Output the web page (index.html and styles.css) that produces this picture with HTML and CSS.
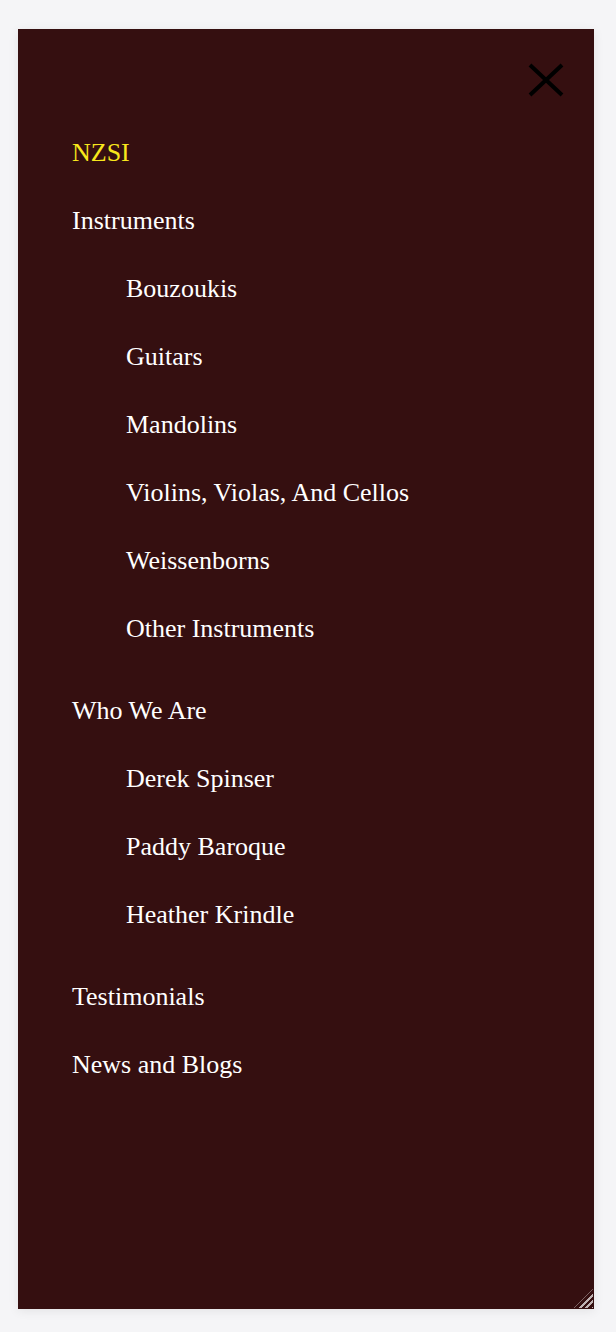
FILE: index.html
```html
<!DOCTYPE html>
<html lang="en">
<head>
<meta charset="utf-8">
<title>Menu</title>
<link rel="stylesheet" href="styles.css">
</head>
<body>
<div class="drawer">
  <button class="close" aria-label="Close menu">
    <svg width="40" height="40" viewBox="0 0 40 40"><path d="M4 5 L36 35 M36 5 L4 35" stroke="#000" stroke-width="4" stroke-linecap="butt" fill="none"/></svg>
  </button>
  <ul class="menu">
    <li><a class="brand" href="#">NZSI</a></li>
    <li><a href="#">Instruments</a>
      <ul class="submenu">
        <li><a href="#">Bouzoukis</a></li>
        <li><a href="#">Guitars</a></li>
        <li><a href="#">Mandolins</a></li>
        <li><a href="#">Violins, Violas, And Cellos</a></li>
        <li><a href="#">Weissenborns</a></li>
        <li><a href="#">Other Instruments</a></li>
      </ul>
    </li>
    <li><a href="#">Who We Are</a>
      <ul class="submenu">
        <li><a href="#">Derek Spinser</a></li>
        <li><a href="#">Paddy Baroque</a></li>
        <li><a href="#">Heather Krindle</a></li>
      </ul>
    </li>
    <li><a href="#">Testimonials</a></li>
    <li><a href="#">News and Blogs</a></li>
  </ul>
  <span class="grip" aria-hidden="true"></span>
</div>
</body>
</html>
```

FILE: styles.css
```css
html, body {
  margin: 0;
  padding: 0;
  background: #f5f5f7;
}
body {
  padding: 29px 22px 23px 18px;
  font-family: "Liberation Serif", "Times New Roman", serif;
}
.drawer {
  position: relative;
  box-sizing: border-box;
  width: 576px;
  height: 1280px;
  background: #350f10;
  padding: 31px 28px 0 54px;
  display: flex;
  flex-direction: column;
  box-shadow: 0 2px 10px rgba(0, 0, 0, 0.08);
}
.close {
  align-self: flex-end;
  width: 40px;
  height: 40px;
  padding: 0;
  border: 0;
  background: transparent;
  display: block;
}
.close svg { display: block; }
.menu, .submenu {
  list-style: none;
  margin: 0;
  padding: 0;
}
.menu {
  margin-top: 19px;
}
.submenu {
  padding-left: 54px;
  margin-bottom: 14px;
}
.menu a {
  display: block;
  line-height: 68px;
  font-size: 26px;
  color: #ffffff;
  text-decoration: none;
}
.menu a.brand {
  color: #f8e71c;
}
.grip {
  position: absolute;
  right: 1px;
  bottom: 1px;
  width: 19px;
  height: 19px;
  background: repeating-linear-gradient(135deg, transparent 0 2.6px, #bfb2b2 2.6px 4.6px);
  clip-path: polygon(100% 0, 100% 100%, 0 100%);
}
```
